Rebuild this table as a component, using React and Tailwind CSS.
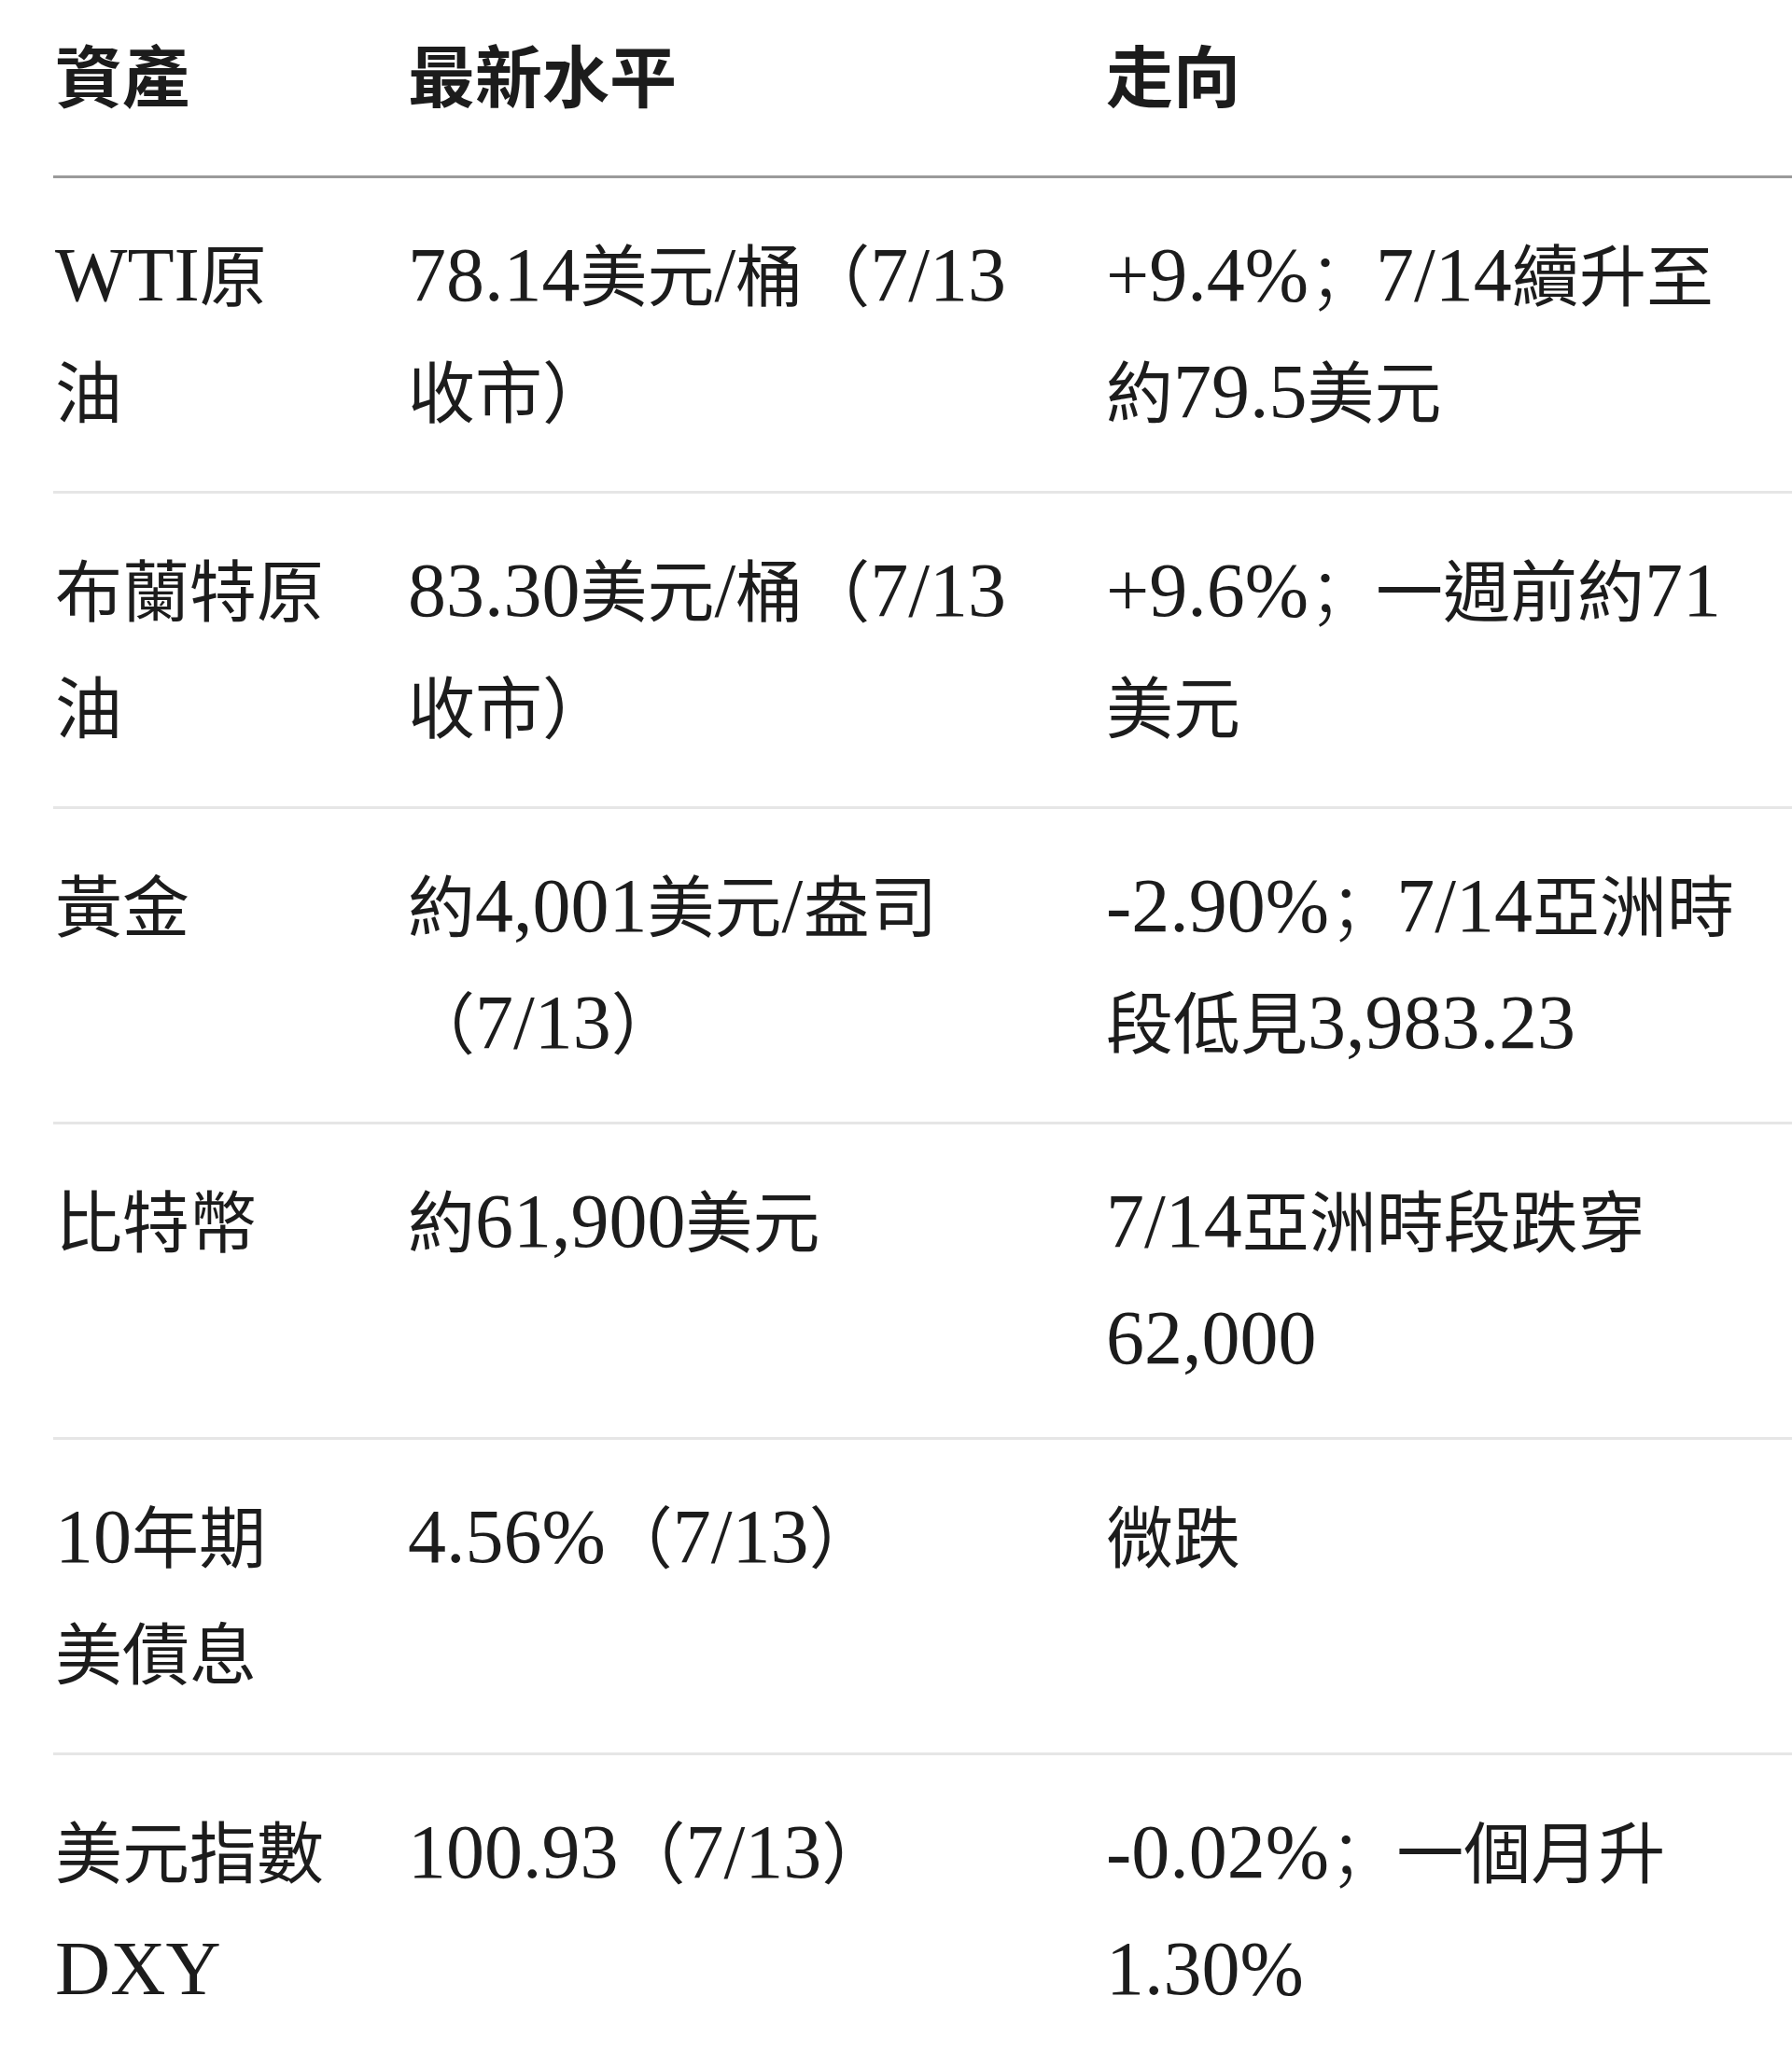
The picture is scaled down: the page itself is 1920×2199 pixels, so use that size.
import React from 'react';

const headers = ['資產', '最新水平', '走向'];

// each cell is a list of lines, matching the wrap of the reference
const rows = [
  [['WTI原', '油'], ['78.14美元/桶（7/13', '收市）'], ['+9.4%；7/14續升至', '約79.5美元']],
  [['布蘭特原', '油'], ['83.30美元/桶（7/13', '收市）'], ['+9.6%；一週前約71', '美元']],
  [['黃金'], ['約4,001美元/盎司', '（7/13）'], ['-2.90%；7/14亞洲時', '段低見3,983.23']],
  [['比特幣'], ['約61,900美元'], ['7/14亞洲時段跌穿', '62,000']],
  [['10年期', '美債息'], ['4.56%（7/13）'], ['微跌']],
  [['美元指數', 'DXY'], ['100.93（7/13）'], ['-0.02%；一個月升', '1.30%']],
];

const cellPad = ['pl-[2px]', '', ''];

// latin runs are set a bit larger than the CJK, like the source page;
// the full-width semicolon sits at the left of its box
const Mixed = ({ text }) =>
  text.split(/([\x20-\x7E]+|；)/).map((part, i) => {
    if (i % 2 === 0) return part;
    if (part === '；')
      return (
        <span key={i} className="font-['Noto_Sans_CJK_SC',sans-serif] font-light leading-none">{part}</span>
      );
    return (
      <span key={i} className="text-[82px] leading-none">{part}</span>
    );
  });

const App = () => {
  return (
    <div className="min-h-screen w-full overflow-hidden bg-white text-[#1c1c1c] font-['Liberation_Serif','Noto_Sans_CJK_TC',serif]">
      <div className="ml-[57px] w-[1880px] text-[72px] leading-[125px]">
        {/* Header */}
        <div className="grid grid-cols-[380px_748px_1fr] pt-[23px] pb-[40px] border-b-[3px] border-[#9a9a9a] font-bold">
          {headers.map((h, i) => (
            <div key={i} className={`whitespace-nowrap ${cellPad[i]}`}>{h}</div>
          ))}
        </div>

        {/* Body */}
        {rows.map((row, r) => (
          <div
            key={r}
            className={`grid grid-cols-[380px_748px_1fr] pt-[45px] pb-[40px] ${
              r < rows.length - 1 ? 'border-b-[3px] border-[#e6e6e6]' : ''
            }`}
          >
            {row.map((cell, c) => (
              <div key={c} className={cellPad[c]}>
                {cell.map((line, l) => (
                  <div key={l} className="whitespace-nowrap">
                    <Mixed text={line} />
                  </div>
                ))}
              </div>
            ))}
          </div>
        ))}
      </div>
    </div>
  );
};

export default App;
